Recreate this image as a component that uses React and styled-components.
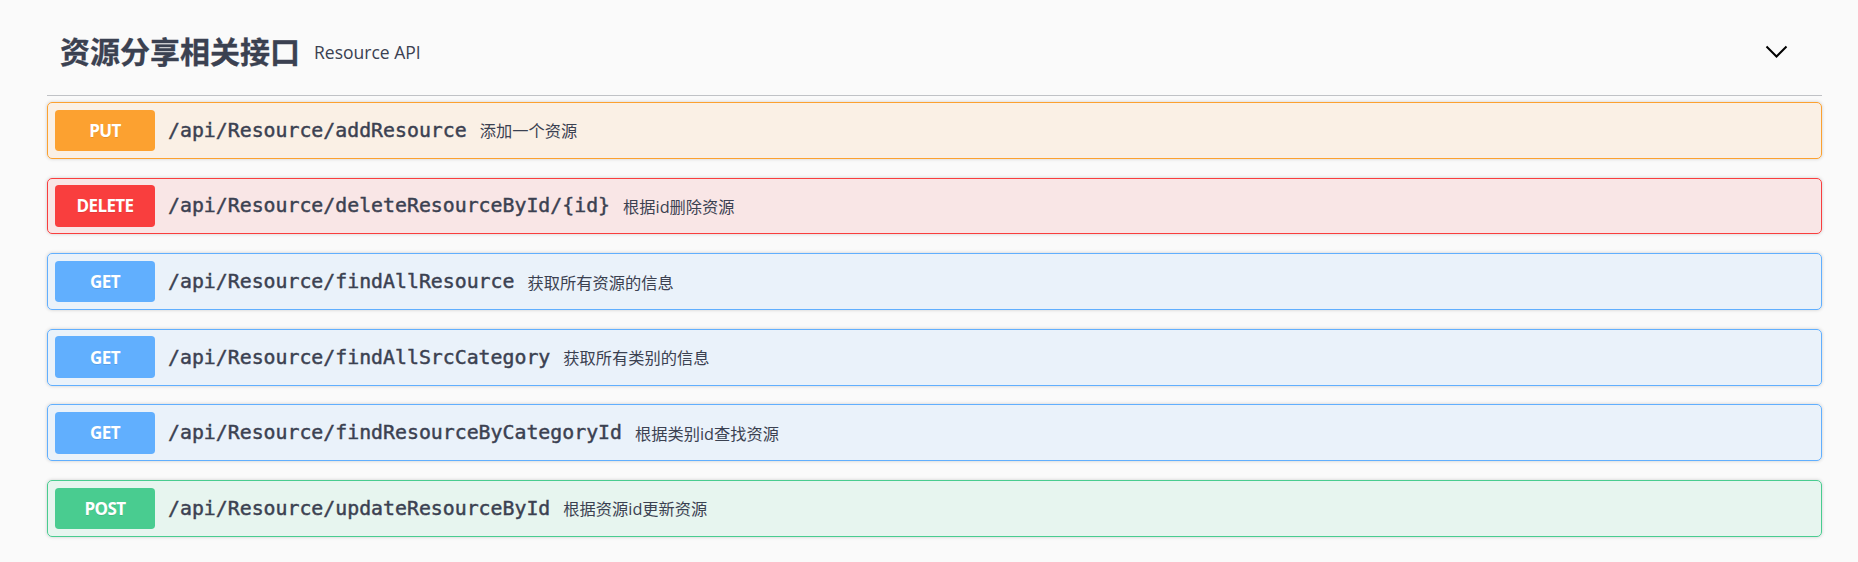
import React from "react";
import styled, { createGlobalStyle } from "styled-components";

const Global = createGlobalStyle`
  html, body {
    margin: 0;
    padding: 0;
    background: #fafafa;
  }
  body {
    font-family: "Open Sans", "Noto Sans CJK SC", sans-serif;
    color: #3b4151;
  }
`;

const Page = styled.div`
  padding: 9px 36px 0 47px;
`;

const TagRow = styled.div`
  display: flex;
  align-items: center;
  box-sizing: border-box;
  height: 87px;
  padding: 0 34px 0 13px;
  border-bottom: 1px solid rgba(59, 65, 81, 0.3);
  margin-bottom: 6px;
`;

const TagTitle = styled.h4`
  margin: 0;
  font-family: "Open Sans", "Noto Sans CJK SC", sans-serif;
  font-size: 30px;
  font-weight: 700;
  line-height: 1;
  color: #3b4151;
  -webkit-text-stroke: 0.3px #3b4151;
`;

const TagSmall = styled.small`
  margin-left: 14px;
  font-family: "Open Sans", "Noto Sans CJK SC", sans-serif;
  font-size: 17.5px;
  color: #3b4151;
  flex: 1;
`;

const ToggleButton = styled.button`
  border: none;
  background: none;
  padding: 0;
  display: flex;
  align-items: center;
  cursor: pointer;
`;

const methods = {
  PUT: "252, 161, 48",
  DELETE: "249, 62, 62",
  GET: "97, 175, 254",
  POST: "73, 204, 144",
};

const Block = styled.div`
  display: flex;
  align-items: center;
  box-sizing: border-box;
  height: 56.8px;
  padding: 0 7px;
  margin-bottom: 18.8px;
  border: 1px solid rgb(${(p) => methods[p.$method]});
  background: rgba(${(p) => methods[p.$method]}, 0.1);
  border-radius: 5px;
  box-shadow: 0 0 3.75px rgba(0, 0, 0, 0.19);
`;

const Method = styled.span`
  display: flex;
  align-items: center;
  justify-content: center;
  width: 100px;
  height: 41.5px;
  flex-shrink: 0;
  border-radius: 3.75px;
  background: rgb(${(p) => methods[p.$method]});
  color: #fff;
  font-family: "Open Sans", sans-serif;
  font-size: 17px;
  font-weight: 700;
  letter-spacing: -0.6px;
  text-shadow: 0 1px 0 rgba(0, 0, 0, 0.1);
`;

const Path = styled.span`
  margin-left: 13px;
  font-family: "DejaVu Sans Mono", monospace;
  font-size: 19.85px;
  font-weight: 400;
  -webkit-text-stroke: 0.45px #3b4151;
  color: #3b4151;
  white-space: nowrap;
`;

const Description = styled.span`
  margin-left: 13px;
  font-family: "Open Sans", "Noto Sans CJK SC", sans-serif;
  font-size: 16.25px;
  color: #3b4151;
`;

const ops = [
  { method: "PUT", path: "/api/Resource/addResource", desc: "添加一个资源" },
  { method: "DELETE", path: "/api/Resource/deleteResourceById/{id}", desc: "根据id删除资源" },
  { method: "GET", path: "/api/Resource/findAllResource", desc: "获取所有资源的信息" },
  { method: "GET", path: "/api/Resource/findAllSrcCategory", desc: "获取所有类别的信息" },
  { method: "GET", path: "/api/Resource/findResourceByCategoryId", desc: "根据类别id查找资源" },
  { method: "POST", path: "/api/Resource/updateResourceById", desc: "根据资源id更新资源" },
];

export default function App() {
  return (
    <>
      <Global />
      <Page>
        <TagRow>
          <TagTitle>资源分享相关接口</TagTitle>
          <TagSmall>Resource API</TagSmall>
          <ToggleButton aria-label="collapse">
            <svg width="23" height="14" viewBox="0 0 23 14">
              <polyline
                points="1.5,1.5 11.5,11.5 21.5,1.5"
                fill="none"
                stroke="#000"
                strokeWidth="2"
              />
            </svg>
          </ToggleButton>
        </TagRow>
        {ops.map((op) => (
          <Block key={op.path} $method={op.method}>
            <Method $method={op.method}>{op.method}</Method>
            <Path>{op.path}</Path>
            <Description>{op.desc}</Description>
          </Block>
        ))}
      </Page>
    </>
  );
}
